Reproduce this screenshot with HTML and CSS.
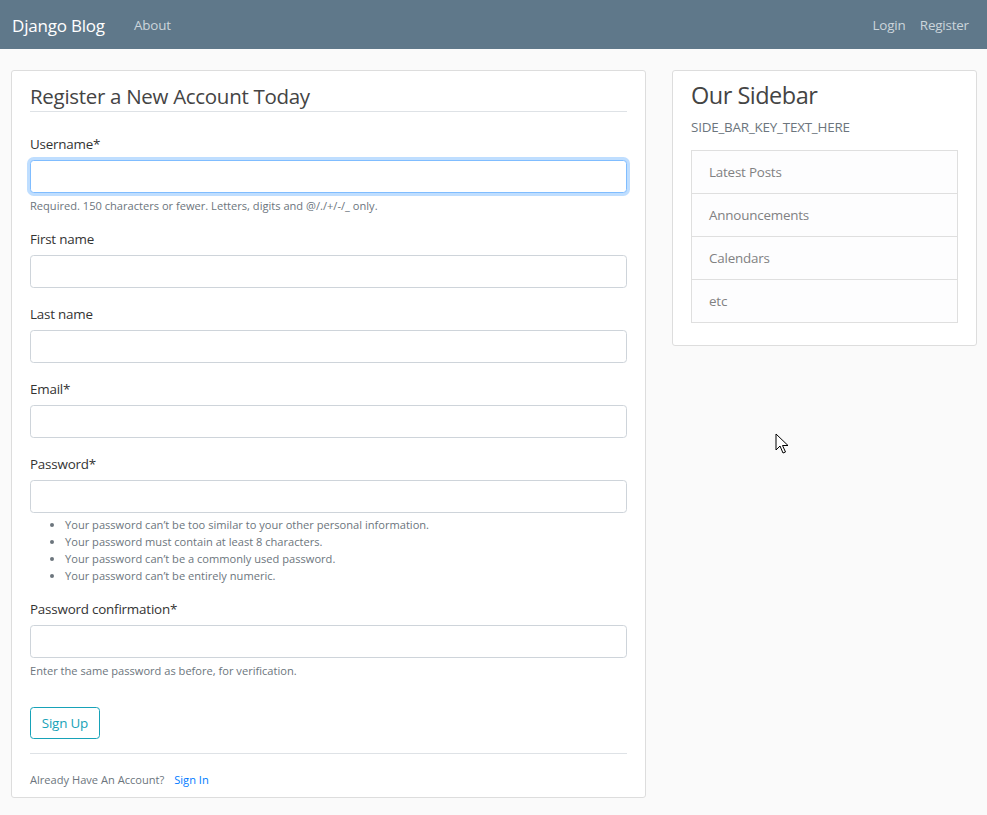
FILE: index.html
```html
<!DOCTYPE html>
<html lang="en">
<head>
<meta charset="utf-8">
<title>Django Blog</title>
<link rel="stylesheet" href="styles.css">
</head>
<body>
<header class="site-header">
  <nav class="navbar">
    <div class="nav-left">
      <a class="brand" href="#">Django Blog</a>
      <a class="nav-link" href="#">About</a>
    </div>
    <div class="nav-right">
      <a class="nav-link" href="#">Login</a>
      <a class="nav-link" href="#">Register</a>
    </div>
  </nav>
</header>
<main class="container">
  <div class="col-main">
    <div class="content-section main-section">
      <form>
        <fieldset class="fieldset">
          <legend class="legend">Register a New Account Today</legend>
          <div class="form-group">
            <label class="label">Username*</label>
            <input class="input input-focus" type="text">
            <small class="help">Required. 150 characters or fewer. Letters, digits and @/./+/-/_ only.</small>
          </div>
          <div class="form-group">
            <label class="label">First name</label>
            <input class="input" type="text">
          </div>
          <div class="form-group">
            <label class="label">Last name</label>
            <input class="input" type="text">
          </div>
          <div class="form-group">
            <label class="label">Email*</label>
            <input class="input" type="text">
          </div>
          <div class="form-group">
            <label class="label">Password*</label>
            <input class="input" type="password">
            <small class="help help-list">
              <ul class="rules">
                <li>Your password can’t be too similar to your other personal information.</li>
                <li>Your password must contain at least 8 characters.</li>
                <li>Your password can’t be a commonly used password.</li>
                <li>Your password can’t be entirely numeric.</li>
              </ul>
            </small>
          </div>
          <div class="form-group">
            <label class="label">Password confirmation*</label>
            <input class="input" type="password">
            <small class="help">Enter the same password as before, for verification.</small>
          </div>
        </fieldset>
        <div class="form-group">
          <button class="btn" type="button">Sign Up</button>
        </div>
      </form>
      <div class="footer-line">
        <small class="muted-small">Already Have An Account? <a class="signin" href="#">Sign In</a></small>
      </div>
    </div>
  </div>
  <div class="col-side">
    <div class="content-section side-section">
      <h3 class="side-title">Our Sidebar</h3>
      <p class="side-text">SIDE_BAR_KEY_TEXT_HERE</p>
      <ul class="list-group">
        <li class="list-item">Latest Posts</li>
        <li class="list-item">Announcements</li>
        <li class="list-item">Calendars</li>
        <li class="list-item">etc</li>
      </ul>
    </div>
  </div>
</main>
<svg class="cursor" width="14" height="22" viewBox="0 0 14 22" aria-hidden="true">
  <path d="M1 1 L1 17 L5 13 L8 20 L10.5 19 L7.5 12.5 L13 12.5 Z" fill="#ffffff" stroke="#000000" stroke-width="1" stroke-linejoin="miter"/>
</svg>
</body>
</html>
```
FILE: styles.css
```css
* { box-sizing: border-box; }

html, body {
  margin: 0;
  padding: 0;
}

body {
  background: #fafafa;
  color: #333333;
  font-family: "Open Sans", "Noto Sans", sans-serif;
  font-size: 13.4px;
  letter-spacing: -0.2px;
  line-height: 1.5;
  position: relative;
  min-height: 815px;
}

a { text-decoration: none; }

.site-header {
  background: #5f788a;
  height: 49px;
}

.navbar {
  display: flex;
  justify-content: space-between;
  align-items: center;
  height: 49px;
  padding: 2px 11px 0 12px;
}

.nav-left, .nav-right {
  display: flex;
  align-items: center;
}

.brand {
  color: #ffffff;
  font-size: 17px;
  letter-spacing: -0.2px;
  line-height: 27px;
  margin-right: 22px;
}

.nav-link {
  color: #cbd5db;
  font-size: 13.4px;
  padding: 0 7.2px;
}

.container {
  display: flex;
  padding: 21px 11px 0 11px;
  gap: 26px;
}

.col-main { width: 635px; flex: 0 0 635px; }
.col-side { width: 305px; flex: 0 0 305px; }

.content-section {
  background: #ffffff;
  border: 1px solid #dddddd;
  border-radius: 3px;
  padding: 9px 18px 9px 18px;
  margin-bottom: 18px;
}

.main-section { padding-bottom: 9px; }

.fieldset {
  border: 0;
  margin: 0 0 14.4px 0;
  padding: 0;
  min-width: 0;
}

.legend {
  display: block;
  width: 100%;
  padding: 1px 0 0 0;
  font-size: 20.5px;
  letter-spacing: -0.3px;
  line-height: 30px;
  color: #444444;
  border-bottom: 1px solid #dee2e6;
  margin-bottom: 21px;
}

.form-group {
  margin-bottom: 15px;
  display: flex;
  flex-direction: column;
}

.label {
  display: block;
  padding-top: 1px;
  line-height: 21px;
  margin-bottom: 5px;
  color: #333333;
}

.input {
  display: block;
  width: 100%;
  height: 33px;
  border: 1px solid #ced4da;
  border-radius: 3.6px;
  background: #ffffff;
  padding: 5px 11px;
  font: inherit;
  outline: none;
}

.input-focus {
  border-color: #80bdff;
  box-shadow: 0 0 0 3px rgba(0, 123, 255, 0.25);
}

.help {
  display: block;
  margin-top: 5px;
  font-size: 11.1px;
  letter-spacing: 0;
  line-height: 15px;
  color: #6c757d;
}

.help-list {
  margin-top: 3px;
  line-height: 17px;
}

.rules {
  margin: 0 0 -1px 0;
  padding-left: 35px;
}

.rules li {
  line-height: 17px;
}

.btn {
  align-self: flex-start;
  font: inherit;
  letter-spacing: -0.2px;
  line-height: 20px;
  color: #17a2b8;
  background: transparent;
  border: 1px solid #17a2b8;
  border-radius: 3.6px;
  padding: 5px 10.8px;
  height: 32px;
}

.footer-line {
  border-top: 1px solid #dee2e6;
  padding-top: 17px;
  margin-top: -1px;
  line-height: 17px;
}

.muted-small {
  font-size: 11.1px;
  letter-spacing: 0;
  line-height: 17px;
  color: #6c757d;
}

.signin {
  color: #007bff;
  margin-left: 7px;
}

.side-section { padding-bottom: 22px; }

.side-title {
  margin: 0 0 7px 0;
  font-size: 23.5px;
  letter-spacing: -0.5px;
  font-weight: 400;
  line-height: 30px;
  color: #444444;
}

.side-text {
  margin: 0 0 12px 0;
  color: #6c757d;
  line-height: 21px;
}

.list-group {
  list-style: none;
  margin: 0;
  padding: 0;
  border: 1px solid #dfdfdf;
}

.list-item {
  background: #fdfdfe;
  color: #818182;
  padding: 11px 17px 10px 17px;
  line-height: 21px;
  border-top: 1px solid #dfdfdf;
}

.list-item:first-child { border-top: 0; }

.cursor {
  position: absolute;
  left: 775px;
  top: 433px;
}
```
